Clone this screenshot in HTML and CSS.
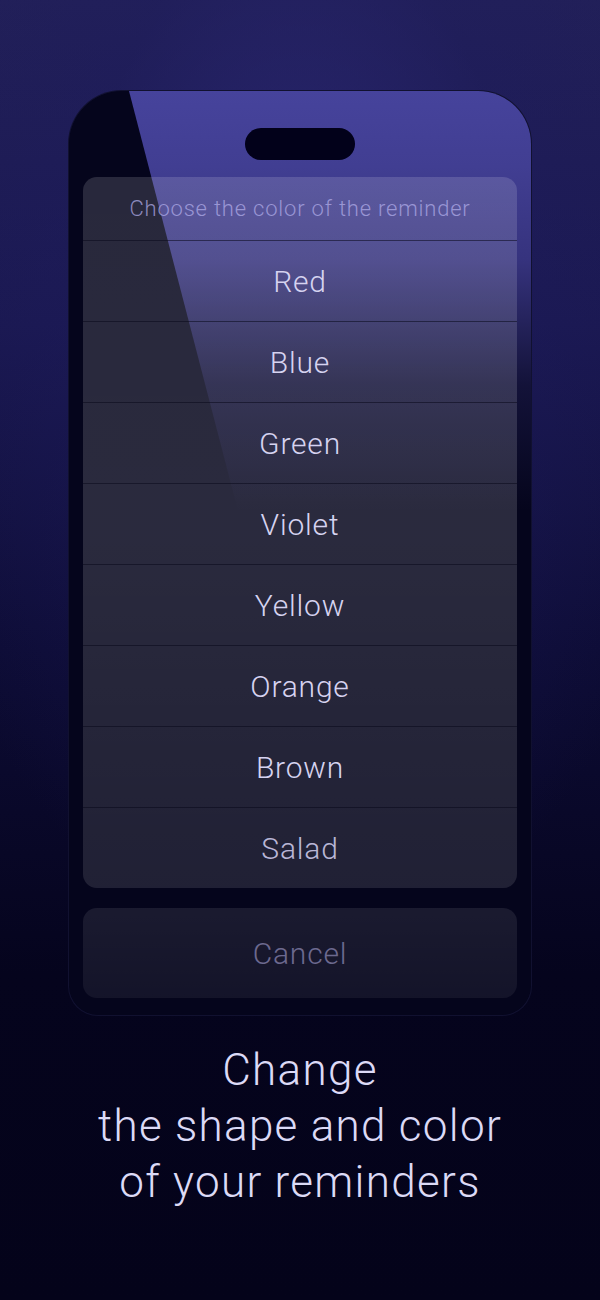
FILE: index.html
```html
<!DOCTYPE html>
<html lang="en">
<head>
  <meta charset="UTF-8" />
  <title>Reminder color</title>
  <link rel="stylesheet" href="styles.css">
</head>
<body>
  <div class="screen">
    <!-- phone -->
    <div class="phone">
      <div class="glare"></div>
      <div class="island"></div>

      <div class="sheet">
        <div class="sheet-title">Choose the color of the reminder</div>
        <div class="option">Red</div>
        <div class="option">Blue</div>
        <div class="option">Green</div>
        <div class="option">Violet</div>
        <div class="option">Yellow</div>
        <div class="option">Orange</div>
        <div class="option">Brown</div>
        <div class="option">Salad</div>
      </div>

      <div class="cancel">Cancel</div>
    </div>

    <!-- caption -->
    <div class="caption">
      Change<br>
      the shape and color<br>
      of your reminders
    </div>
  </div>
</body>
</html>
```

FILE: styles.css
```css
/* base */
html, body {
  margin: 0;
  padding: 0;
  height: 100%;
}
body {
  font-family: "Roboto Light", Roboto, "Liberation Sans", sans-serif;
  font-weight: 300;
  background:
    radial-gradient(ellipse 420px 700px at 300px 260px, rgba(48, 44, 130, 0.55) 0%, rgba(30, 28, 95, 0.35) 50%, rgba(5, 4, 28, 0) 100%),
    linear-gradient(180deg, #222058 0%, #1a1850 25%, #0d0c35 50%, #05041d 75%, #04031a 100%);
  overflow: hidden;
}
.screen {
  width: 600px;
  height: 1300px;
  display: flex;
  flex-direction: column;
  align-items: center;
  padding-top: 90px;
  box-sizing: border-box;
}

/* phone body */
.phone {
  position: relative;
  width: 464px;
  padding: 37px 14px 17px;
  box-sizing: border-box;
  background: #05051c;
  border: 1px solid rgba(90, 86, 170, 0.15);
  border-radius: 54px 54px 30px 30px;
  display: flex;
  flex-direction: column;
  align-items: center;
  overflow: hidden;
}
.glare {
  position: absolute;
  top: 0;
  left: 0;
  right: 0;
  height: 420px;
  background: linear-gradient(180deg, #46439c 0%, #413e92 18%, #36337e 40%, rgba(40, 38, 100, 0.4) 70%, rgba(20, 18, 60, 0) 100%);
  clip-path: polygon(60px 0, 100% 0, 100% 100%, 169px 100%);
}
.island {
  position: relative;
  width: 110px;
  height: 32px;
  border-radius: 16px;
  background: #02011a;
  margin-bottom: 17px;
}

/* action sheet */
.sheet {
  position: relative;
  width: 100%;
  border-radius: 14px;
  background: linear-gradient(180deg, rgba(255, 255, 255, 0.14) 0%, rgba(255, 255, 255, 0.15) 50%, rgba(255, 255, 255, 0.11) 100%);
  overflow: hidden;
}
.sheet-title {
  height: 63px;
  display: flex;
  align-items: center;
  justify-content: center;
  font-size: 22px;
  color: rgba(176, 172, 232, 0.75);
  letter-spacing: 0.8px;
}
.option {
  height: 80px;
  border-top: 1px solid rgba(10, 10, 28, 0.55);
  display: flex;
  align-items: center;
  justify-content: center;
  font-size: 30px;
  color: #d6d3f0;
  letter-spacing: 0.8px;
}
.option:last-child {
  color: #b9b6d6;
}

.cancel {
  position: relative;
  width: 100%;
  height: 90px;
  margin-top: 20px;
  border-radius: 14px;
  background: linear-gradient(180deg, rgba(255, 255, 255, 0.085), rgba(255, 255, 255, 0.06));
  display: flex;
  align-items: center;
  justify-content: center;
  font-size: 30px;
  color: #6c698f;
  letter-spacing: 0.8px;
}

/* bottom text */
.caption {
  margin-top: 26px;
  text-align: center;
  font-size: 44px;
  line-height: 56px;
  color: #dcdaf6;
  letter-spacing: 1.3px;
}
```
